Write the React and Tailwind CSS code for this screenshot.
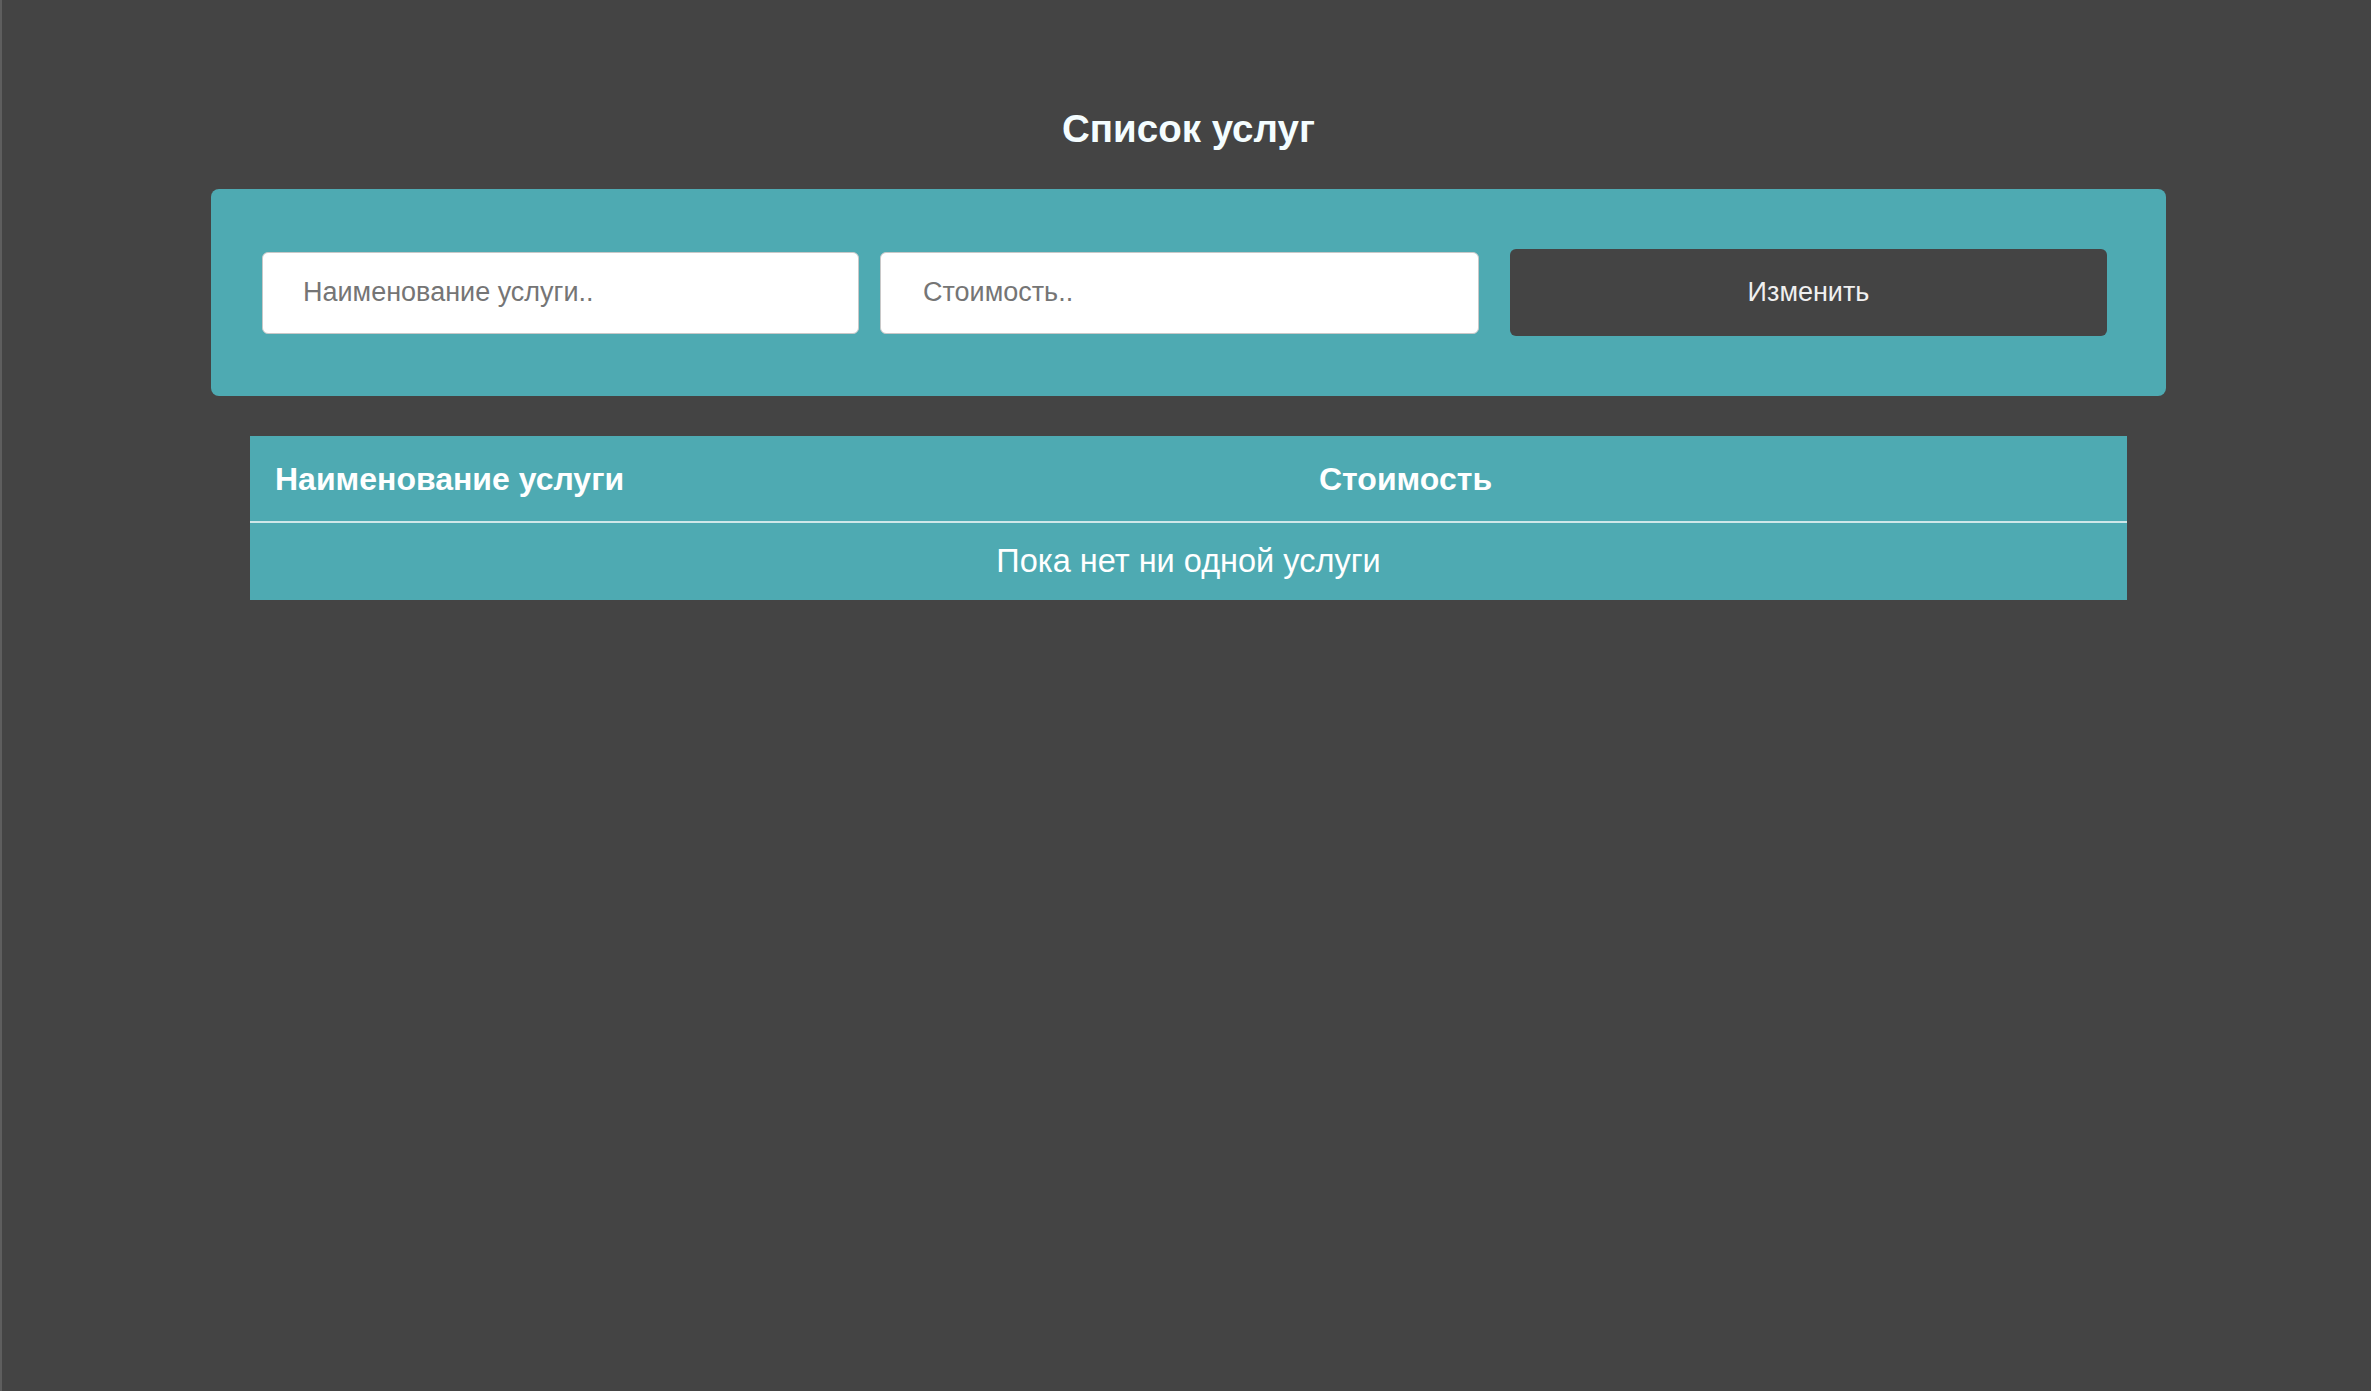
import React from "react";

export default function App() {
  return (
    <div className="min-h-screen w-full bg-[#444444] border-l-2 border-[#5e5e5e] font-['Liberation_Sans',Arial,sans-serif] overflow-hidden">
      <div className="ml-[209px] w-[1955px] pt-[108px] text-center">
        <h2 className="text-[38.5px] leading-[42px] font-bold text-[#f4fdff]">Список услуг</h2>
      </div>

      <div className="ml-[209px] mt-[39px] w-[1955px] h-[207px] rounded-[8px] bg-[#4eaab2] flex items-center pl-[51px]">
        <input
          type="text"
          placeholder="Наименование услуги.."
          className="w-[597px] h-[82px] bg-white border border-[#c8c8c8] rounded-[6px] pl-[40px] pr-[16px] text-[27px] text-[#333] placeholder:text-[#757575] outline-none font-['Liberation_Sans',Arial,sans-serif]"
        />
        <input
          type="text"
          placeholder="Стоимость.."
          className="ml-[21px] w-[599px] h-[82px] bg-white border border-[#c8c8c8] rounded-[6px] pl-[42px] pr-[16px] text-[27px] text-[#333] placeholder:text-[#757575] outline-none font-['Liberation_Sans',Arial,sans-serif]"
        />
        <button className="ml-[31px] w-[597px] h-[87px] bg-[#444444] rounded-[6px] text-[27px] text-[#f0f0f0] font-['Liberation_Sans',Arial,sans-serif]">
          Изменить
        </button>
      </div>

      <div className="ml-[248px] mt-[40px] w-[1877px] bg-[#4eaab2]">
        <div className="grid grid-cols-[1044px_833px] h-[85px] items-center text-white font-bold text-[32px]">
          <div className="pl-[25px]">Наименование услуги</div>
          <div className="pl-[25px]">Стоимость</div>
        </div>
        <div className="h-[2px] bg-[#cfe7e9]"></div>
        <div className="h-[77px] flex items-center justify-center text-white text-[32.5px]">
          Пока нет ни одной услуги
        </div>
      </div>
    </div>
  );
}
